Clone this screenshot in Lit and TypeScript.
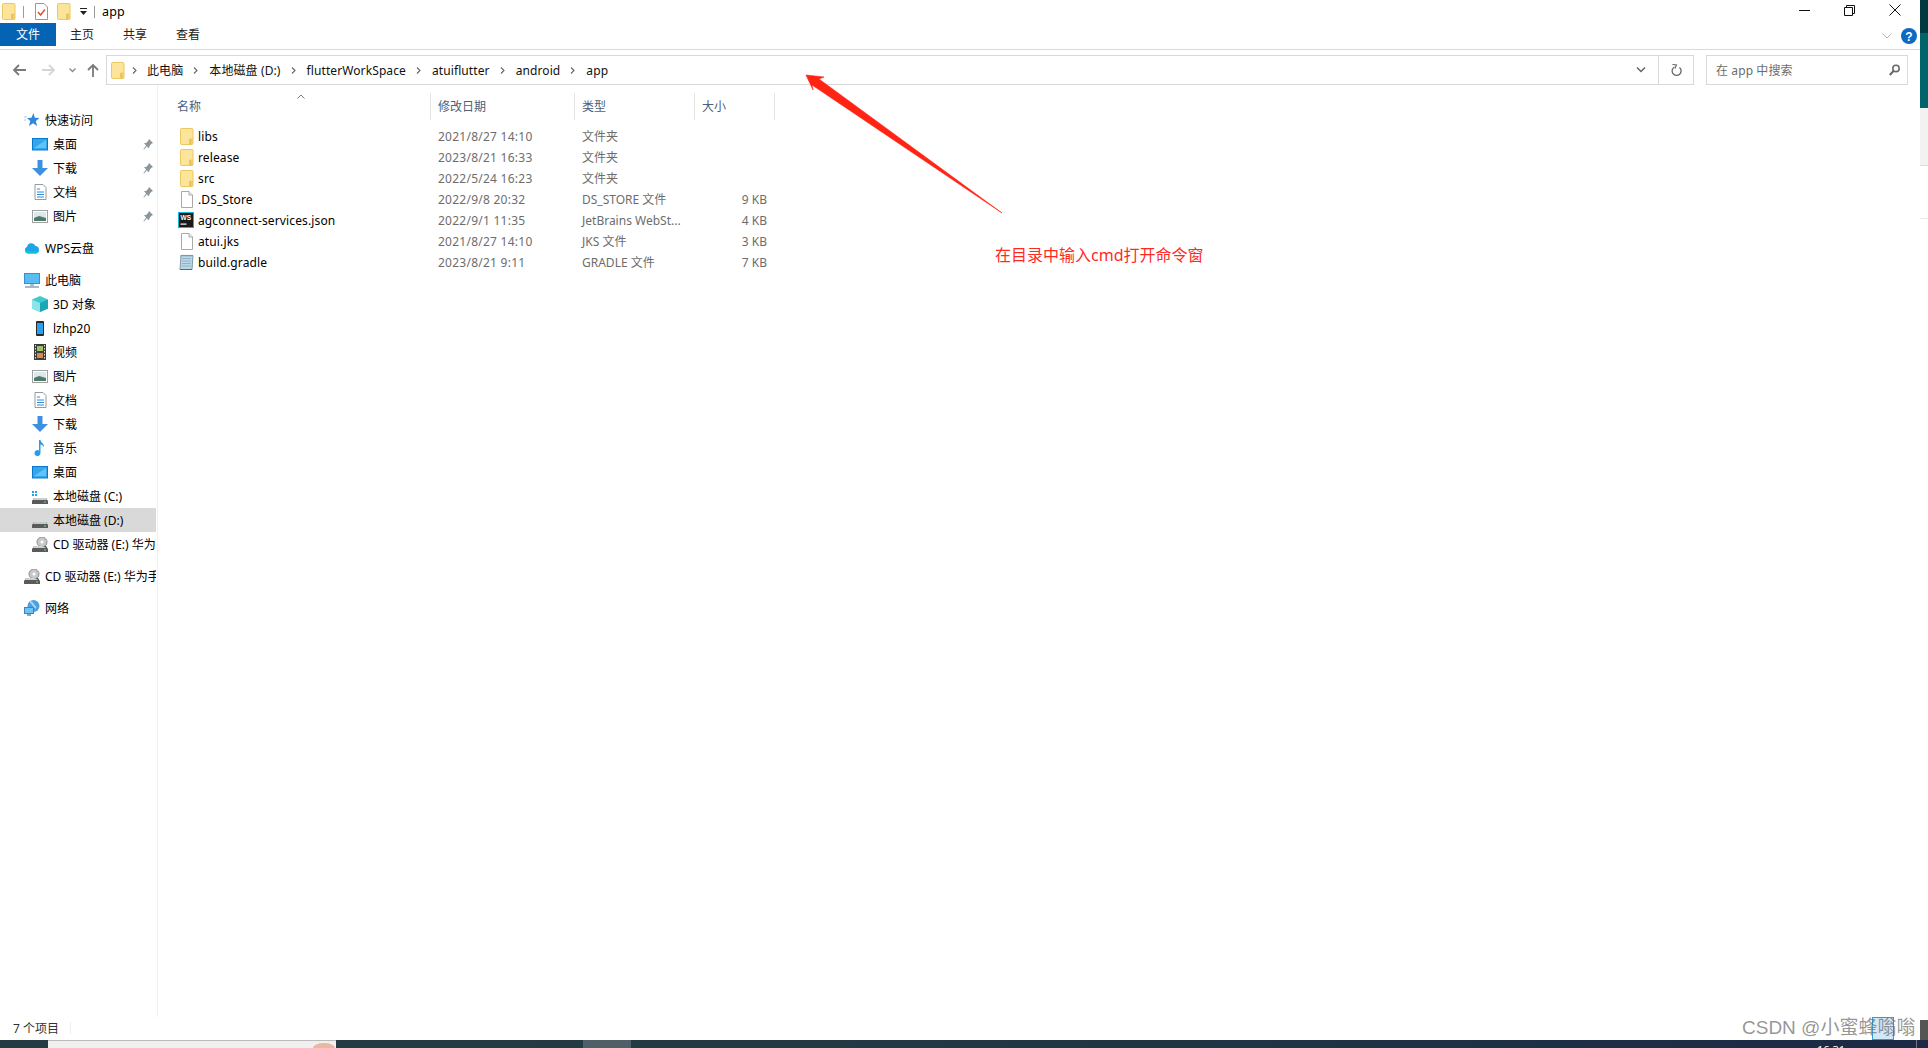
import { LitElement, html, css, svg } from "lit";
import { customElement } from "lit/decorators.js";

const I = (w: number, h: number, body: unknown, cls = "") =>
  html`<svg class="ic ${cls}" width=${w} height=${h} viewBox="0 0 ${w} ${h}">${body}</svg>`;

const folder = () => I(14, 17, svg`
  <rect x=".5" y=".5" width="12.5" height="16" rx="1" fill="#fde49b" stroke="#ecc862"/>
  <path d="M9.5 16V10.5h3.5V16z" fill="#f0cd6a"/><path d="M10 16V11" stroke="#e0b440"/>`);
const blank = () => I(14, 17, svg`
  <path d="M1.5.5H9L12.5 4V16.5H1.5z" fill="#fff" stroke="#a9a9a9"/><path d="M9 .5V4h3.5" fill="#eee" stroke="#a9a9a9"/>`);
const ws = () => I(16, 16, svg`
  <rect x=".5" y=".5" width="15" height="15" fill="#1a1a1a" stroke="#10b8d8"/>
  <text x="2.5" y="8" font-size="6.5" font-weight="700" fill="#fff" font-family="Liberation Sans">WS</text>
  <rect x="2.5" y="11.5" width="6" height="1.2" fill="#fff"/>`);
const gradle = () => I(16, 17, svg`
  <path d="M3 1.5h12L14 15.5H2z" fill="#bcd8e8" stroke="#7e9aaa"/>
  <path d="M4 4.5h9M4 7h9M3.7 9.5h9M3.5 12h9" stroke="#8db4ca"/>
  <path d="M3 .8v2M5 .8v2M7 .8v2M9 .8v2M11 .8v2M13 .8v2" stroke="#7e9aaa" stroke-width=".7"/>
  <path d="M2 15.5h12" stroke="#666"/>`);

const desk = () => I(16, 13, svg`<rect x=".5" y=".5" width="15" height="11.5" fill="#33a6ee" stroke="#0a78c8"/><path d="M2 10L14 2v8z" fill="#63c3f7"/>`);
const down = () => I(16, 16, svg`<path d="M5.5 0h5v8H16l-8 8-8-8h5.500z" fill="#3f8fe0"/>`);
const doc = () => I(13, 16, svg`
  <path d="M1 .5h8l3 3v12H1z" fill="#fff" stroke="#9a9a9a"/>
  <path d="M3 5h3M3 8h7M3 10.500h7M3 13h7" stroke="#2b8fe0"/>`);
const pic = () => I(16, 13, svg`<rect x=".5" y=".5" width="15" height="12" fill="#fff" stroke="#a0a0a0"/><rect x="2" y="2" width="12" height="9" fill="#d8e8ee"/><path d="M2 8l5-2 7 2v3H2z" fill="#4e7a68"/>`);
const star = () => I(16, 14, svg`<path d="M9.500 0l1.300 4.700L15.500 5l-3.700 3 1.300 5-4.100-2.700L5 13l1.300-5L3 5l4.500-.3z" fill="#2f86dd"/><path d="M0 4h3M0 7h2" stroke="#9cc7ee"/>`);
const cloud = () => I(16, 12, svg`<path d="M4 11.500A3.500 3.500 0 0 1 3 4.800 4.500 4.500 0 0 1 11.500 4 3.800 3.800 0 0 1 12 11.500z" fill="#1ca6e8"/><path d="M4 11.500A3.500 3.500 0 0 1 1 8c4 2 8 2 14 1a3.800 3.800 0 0 1-3 2.500z" fill="#16c3d8"/>`);
const pc = () => I(16, 15, svg`<rect x=".5" y=".5" width="15" height="10" fill="#58bdf5" stroke="#3b8fc8"/><path d="M6 11h4v2H6z" fill="#a8c0d0"/><path d="M1 14h14" stroke="#8aa2b4" stroke-width="1.500"/>`);
const cube = () => I(16, 16, svg`<path d="M8 0l8 3.500v9L8 16 0 12.500v-9z" fill="#3ecbd0"/><path d="M0 3.500L8 7v9L0 12.500z" fill="#8de4e6"/><path d="M16 3.500L8 7v9l8-3.500z" fill="#19a8b4"/>`);
const phone = () => I(16, 15, svg`<rect x="4" y="0" width="8" height="15" rx="1" fill="#2a2a2a"/><rect x="5" y="2" width="6" height="11" fill="#2aa0f0"/>`);
const film = () => I(16, 16, svg`<rect x="2" y="0" width="12" height="16" fill="#3c3c3c"/><rect x="5" y="2" width="6" height="5" fill="#9fc36a"/><rect x="5" y="9" width="6" height="5" fill="#d88a4a"/><path d="M3.500 1v14M12.500 1v14" stroke="#ddd" stroke-dasharray="1.500 1.500"/>`);
const music = () => I(16, 16, svg`<path d="M7 0h1.500c.5 3 4 3.500 3.500 7-1-1.500-2-2.200-3.500-2.500V13a3 3 0 1 1-1.500-2.500z" fill="#2a9be8"/>`);
const diskC = () => I(16, 15, svg`<path d="M0 2h2v2H0zM3 2h2v2H3zM0 5h2v2H0zM3 5h2v2H3z" fill="#22a0ea"/><path d="M2 9h12l2 3v3H0v-3z" fill="#5a5a5a"/><path d="M2 9h12l1 2H1z" fill="#cfcfcf"/><rect x="12" y="12.500" width="2" height="1" fill="#5fe06a"/>`);
const diskD = () => I(16, 15, svg`<path d="M2 9h12l2 3v3H0v-3z" fill="#5a5a5a"/><path d="M2 9h12l1 2H1z" fill="#c8c8c8"/><rect x="12" y="12.500" width="2" height="1" fill="#5fe06a"/>`);
const cd = () => I(16, 15, svg`<circle cx="10" cy="5" r="5" fill="#c8c8c8" stroke="#909090"/><circle cx="10" cy="5" r="1.500" fill="#fff"/><path d="M2 9h12l2 3v3H0v-3z" fill="#5a5a5a"/><path d="M2 9h9l3 2H1z" fill="#d0d0d0"/><rect x="12" y="12.500" width="2" height="1" fill="#5fe06a"/>`);
const net = () => I(16, 16, svg`<circle cx="9.500" cy="6" r="6" fill="#4e9fe0"/><path d="M6 2c3 0 3 4 6 6" stroke="#a7d8f5" stroke-width="2" fill="none"/><rect x=".5" y="7.500" width="9" height="6" fill="#6cc6f5" stroke="#3d85b8"/><path d="M3 15h4" stroke="#6b8a9e" stroke-width="1.500"/>`);
const pin = () => I(10, 11, svg`<path d="M6 0l4 4-1.500.7L6.500 7 6 9.500 3.800 7.200 1 10.500l-.6-.6L3.200 6.600 1 4.300l2.500-.6L5.300 1.500z" fill="#8c959c"/>`);
const chev = () => I(5, 7, svg`<path d="M1 .5L4 3.500 1 6.500" fill="none" stroke="#666" stroke-width="1.100"/>`);
const arrow = (d: string, color: string) => I(14, 14, svg`<path d=${d} fill="none" stroke=${color} stroke-width="1.800"/>`);

type Side = { t: string; i: () => unknown; kid?: boolean; pin?: boolean; sel?: boolean; gap?: boolean };
const side: Side[] = [
  { t: "快速访问", i: star },
  { t: "桌面", i: desk, kid: true, pin: true },
  { t: "下载", i: down, kid: true, pin: true },
  { t: "文档", i: doc, kid: true, pin: true },
  { t: "图片", i: pic, kid: true, pin: true },
  { t: "WPS云盘", i: cloud, gap: true },
  { t: "此电脑", i: pc, gap: true },
  { t: "3D 对象", i: cube, kid: true },
  { t: "lzhp20", i: phone, kid: true },
  { t: "视频", i: film, kid: true },
  { t: "图片", i: pic, kid: true },
  { t: "文档", i: doc, kid: true },
  { t: "下载", i: down, kid: true },
  { t: "音乐", i: music, kid: true },
  { t: "桌面", i: desk, kid: true },
  { t: "本地磁盘 (C:)", i: diskC, kid: true },
  { t: "本地磁盘 (D:)", i: diskD, kid: true, sel: true },
  { t: "CD 驱动器 (E:) 华为手机助手", i: cd, kid: true },
  { t: "CD 驱动器 (E:) 华为手机助手", i: cd, gap: true },
  { t: "网络", i: net, gap: true },
];

const files = [
  { n: "libs", d: "2021/8/27 14:10", t: "文件夹", s: "", i: folder },
  { n: "release", d: "2023/8/21 16:33", t: "文件夹", s: "", i: folder },
  { n: "src", d: "2022/5/24 16:23", t: "文件夹", s: "", i: folder },
  { n: ".DS_Store", d: "2022/9/8 20:32", t: "DS_STORE 文件", s: "9 KB", i: blank },
  { n: "agconnect-services.json", d: "2022/9/1 11:35", t: "JetBrains WebSt...", s: "4 KB", i: ws, wide: true },
  { n: "atui.jks", d: "2021/8/27 14:10", t: "JKS 文件", s: "3 KB", i: blank },
  { n: "build.gradle", d: "2023/8/21 9:11", t: "GRADLE 文件", s: "7 KB", i: gradle, wide: true },
];

const crumbs = ["此电脑", "本地磁盘 (D:)", "flutterWorkSpace", "atuiflutter", "android", "app"];

@customElement("app-root")
export class AppRoot extends LitElement {
  static styles = css`
    :host { display: block; position: relative; width: 1928px; height: 1048px; overflow: hidden; background: #fff;
      font-family: "Noto Sans", "Noto Sans CJK SC", sans-serif; font-size: 12px; color: #000; }
    .ic { display: block; flex: none; }
    .top { display: flex; height: 1040px; }
    .win { width: 1920px; display: flex; flex-direction: column; }
    .title { height: 23px; display: flex; align-items: center; padding-left: 2px; }
    .bar { width: 1px; height: 12px; background: #9a9a9a; }
    .t-sep1 { margin: 0 11px 0 7px; }
    .t-sep2 { margin: 0 7px 0 6px; }
    .t-f2 { margin: 0 8px 0 9px; }
    .apptitle { font-size: 12.500px; letter-spacing: .2px; }
    .ctl { margin-left: auto; display: flex; align-items: center; margin-right: 19px; gap: 34px; margin-top: -3px; }
    .tabs { height: 26px; border-bottom: 1px solid #dadada; box-sizing: content-box; display: flex; position: relative; }
    .tab { height: 23px; line-height: 23px; text-align: center; color: #222; width: 24px; }
    .tab.file { width: 56px; background: #0563b3; color: #fff; margin-right: 14px; }
    .tab.t2 { margin-right: 29px; }
    .helpwrap { margin-left: auto; display: flex; align-items: center; height: 23px; gap: 9px; margin-right: 3px; margin-top: 1px; }
    .nav { height: 30px; padding-top: 5px; display: flex; align-items: stretch; }
    .navbtns { width: 106px; display: flex; align-items: center; padding-left: 12px; box-sizing: border-box; }
    .sp16 { width: 16px; } .sp12 { width: 12.500px; } .sp10 { width: 10.500px; }
    .addr { width: 1588px; box-sizing: border-box; border: 1px solid #d9d9d9; display: flex; align-items: center; padding-left: 4px; }
    .fgap { width: 7px; }
    .crumb { display: flex; align-items: center; }
    .crumb span { margin: 0 10px 0 11px; color: #111; letter-spacing: .1px; }
    .crumb.first span { margin-left: 10px; }
    .grow { flex: 1; }
    .addr .dd { width: 34px; height: 100%; display: flex; align-items: center; justify-content: center; }
    .addr .rf { width: 34px; height: 100%; border-left: 1px solid #d9d9d9; display: flex; align-items: center; justify-content: center; }
    .search { margin-left: 12px; width: 202px; box-sizing: border-box; border: 1px solid #d9d9d9; display: flex; align-items: center; padding: 0 7px 0 9px; color: #6d6d6d; justify-content: space-between; letter-spacing: .1px; }
    .content { flex: 1; display: flex; min-height: 0; }
    .side { width: 158px; box-sizing: border-box; border-right: 1px solid #f0f0f0; padding-top: 23px; overflow: hidden; flex: none; }
    .si { height: 24px; width: 156px; display: flex; align-items: center; padding-left: 24px; box-sizing: border-box; white-space: nowrap; overflow: hidden; position: relative; }
    .si.kid { padding-left: 32px; }
    .si.gap { margin-top: 8px; }
    .si.sel { background: #d9d9d9; }
    .si .iw { width: 16px; flex: none; display: flex; justify-content: center; }
    .si .lbl { margin-left: 5px; }
    .si .pin { position: absolute; left: 143px; top: 7px; }
    .list { flex: 1; padding-top: 8px; position: relative; }
    .cols { display: grid; grid-template-columns: 273px 144px 120px 80px; }
    .hd { height: 27px; color: #4c607a; }
    .hd div { border-right: 1px solid #e5e5e5; line-height: 27px; padding-left: 7px; }
    .hd div:first-child { padding-left: 19px; }
    .caret { position: absolute; left: 139px; top: 9px; }
    .rows { margin-top: 5.500px; }
    .row { height: 21px; align-items: center; color: #6d6d6d; }
    .row > div { padding-left: 7px; white-space: nowrap; overflow: hidden; }
    .row .dt { letter-spacing: .25px; }
    .row .nm { display: flex; align-items: center; padding-left: 22px; color: #000; letter-spacing: .13px; }
    .row .icw { width: 18px; flex: none; }
    .row .icw.wide { margin-left: -2px; width: 20px; }
    .row .sz { text-align: right; padding-right: 8px; }
    .status { height: 21px; padding-bottom: 2px; display: flex; align-items: center; padding-left: 13px; color: #333; }
    .status i { display: block; width: 1px; height: 12px; background: #eee; margin-left: 11px; }
    .edge { width: 8px; display: flex; flex-direction: column; }
    .e1 { height: 33px; background: #003a40; }
    .e2 { height: 75px; background: #00646a; }
    .e3 { height: 57px; background: #f2f2f2; border-bottom: 1px solid #ddd; }
    .e4 { height: 52px; border-bottom: 1px solid #e8e8e8; }
    .e5 { flex: 1; }
    .e6 { height: 20px; background: #555; }
    .task { height: 8px; display: flex; overflow: hidden; background: linear-gradient(90deg, #243b45, #233a44 40%, #1b2a45); color: #fff; }
    .thumb { width: 288px; margin-left: 48px; background: #f0f0f0; border-top: 1px solid #bbb; box-sizing: border-box; }
    .hl { width: 48px; margin-left: 247px; background: #4e5f68; }
    .clock { margin-left: 1186px; line-height: 13px; margin-top: 3px; font-size: 11px; }
    .tline { width: 1px; background: #778; margin-left: 71px; }
    .anno { position: absolute; left: 0; top: 0; pointer-events: none; }
    .note { position: absolute; left: 995px; top: 245px; color: #ff2a1f; font-size: 16px; line-height: 20px; white-space: nowrap; }
    .wm { position: absolute; left: 1742px; top: 1016px; font-size: 19px; line-height: 24px; color: rgba(110,110,110,.72); font-family: "Liberation Sans", "Noto Sans CJK SC", sans-serif; white-space: nowrap; }
    .selbox { position: absolute; left: 1872px; top: 1017px; width: 22px; height: 23px; box-sizing: border-box; border: 1px solid #2a9fd8; background: rgba(150,205,240,.45); }
  `;

  render() {
    return html`
      <div class="top">
        <div class="win">
          <div class="title">
            ${folder()}<div class="bar t-sep1"></div>
            ${I(13, 17, svg`<path d="M.5.500H9L12.500 4v12.500H.5z" fill="#fff" stroke="#999"/><path d="M3 9l2.500 3L10 6.500" fill="none" stroke="#e2552a" stroke-width="1.600"/>`)}
            <span class="t-f2">${folder()}</span>
            ${I(9, 8, svg`<path d="M1 .5h7" stroke="#222"/><path d="M1 3h7L4.500 7z" fill="#222"/>`)}
            <div class="bar t-sep2"></div>
            <span class="apptitle">app</span>
            <div class="ctl">
              ${I(11, 11, svg`<path d="M0 5.500h11" stroke="#111"/>`)}
              ${I(11, 11, svg`<path d="M.5 2.500h8v8h-8zM2.500 2.500v-2h8v8h-2" fill="none" stroke="#111"/>`)}
              ${I(12, 12, svg`<path d="M.5.500l11 11M11.500.500l-11 11" stroke="#111"/>`)}
            </div>
          </div>
          <div class="tabs">
            <div class="tab file">文件</div>
            <div class="tab t2">主页</div>
            <div class="tab t2">共享</div>
            <div class="tab">查看</div>
            <div class="helpwrap">
              ${I(10, 6, svg`<path d="M.5.500L5 5 9.500.500" fill="none" stroke="#b5b5b5"/>`)}
              ${I(16, 16, svg`<circle cx="8" cy="8" r="8" fill="#0e68c4"/><text x="8" y="12.500" text-anchor="middle" font-size="12" font-weight="700" fill="#fff" font-family="Liberation Sans">?</text>`)}
            </div>
          </div>
          <div class="nav">
            <div class="navbtns">
              ${arrow("M14 7H2M7 2L2 7l5 5", "#7a7a7a")}
              <span class="sp16"></span>
              ${arrow("M0 7h12M7 2l5 5-5 5", "#d5d5d5")}
              <span class="sp12"></span>
              ${I(7, 5, svg`<path d="M.5.500L3.500 3.500 6.500.500" fill="none" stroke="#888" stroke-width="1.300"/>`)}
              <span class="sp10"></span>
              ${arrow("M7 14V2M2 7l5-5 5 5", "#7a7a7a")}
            </div>
            <div class="addr">
              ${folder()}
              <span class="fgap"></span>
              ${crumbs.map((c, i) => html`<div class="crumb ${i === 0 ? "first" : ""}">${chev()}<span>${c}</span></div>`)}
              <div class="grow"></div>
              <div class="dd">${I(10, 6, svg`<path d="M1 .5L5 4.500 9 .5" fill="none" stroke="#666" stroke-width="1.500"/>`)}</div>
              <div class="rf">${I(11, 13, svg`<path d="M8.500 3.500a4.500 4.500 0 1 1-5-.5" fill="none" stroke="#666" stroke-width="1.300"/><path d="M1.500 .5L5.500 1 4 4.500" fill="none" stroke="#666" stroke-width="1.100"/>`)}</div>
            </div>
            <div class="search">
              <span>在 app 中搜索</span>
              ${I(11, 12, svg`<circle cx="7" cy="4.500" r="3.200" fill="none" stroke="#666" stroke-width="1.500"/><path d="M4.500 7L.8 11" stroke="#666" stroke-width="2"/>`)}
            </div>
          </div>
          <div class="content">
            <div class="side">
              ${side.map(s => html`
                <div class="si ${s.kid ? "kid" : ""} ${s.gap ? "gap" : ""} ${s.sel ? "sel" : ""}">
                  <span class="iw">${s.i()}</span><span class="lbl">${s.t}</span>
                  ${s.pin ? html`<span class="pin">${pin()}</span>` : ""}
                </div>`)}
            </div>
            <div class="list">
              <div class="cols hd">
                <div>名称</div><div>修改日期</div><div>类型</div><div>大小</div>
              </div>
              <span class="caret">${I(8, 5, svg`<path d="M.5 4.500L4 1l3.500 3.500" fill="none" stroke="#777"/>`)}</span>
              <div class="rows">
                ${files.map(f => html`
                  <div class="cols row">
                    <div class="nm"><span class="icw ${f.wide ? "wide" : ""}">${f.i()}</span>${f.n}</div>
                    <div class="dt">${f.d}</div><div>${f.t}</div><div class="sz">${f.s}</div>
                  </div>`)}
              </div>
            </div>
          </div>
          <div class="status">7 个项目<i></i></div>
        </div>
        <div class="edge">
          <div class="e1"></div><div class="e2"></div><div class="e3"></div><div class="e4"></div><div class="e5"></div><div class="e6"></div>
        </div>
      </div>
      <div class="task">
        <div class="thumb">${I(288, 8, svg`<ellipse cx="276" cy="7" rx="11" ry="5" fill="#e8b8a0"/>`)}</div>
        <div class="hl"></div>
        <div class="clock">16:31</div>
        <div class="tline"></div>
      </div>
      <svg class="anno" width="1928" height="1048" viewBox="0 0 1928 1048">
        <path d="M806 75L824 77 819 79 1002 213 812 85 813 90z" fill="#ff2414" stroke="#ff2414" stroke-width=".6"/>
      </svg>
      <div class="note">在目录中输入cmd打开命令窗</div>
      <div class="selbox"></div>
      <div class="wm">CSDN @小蜜蜂嗡嗡</div>
    `;
  }
}
